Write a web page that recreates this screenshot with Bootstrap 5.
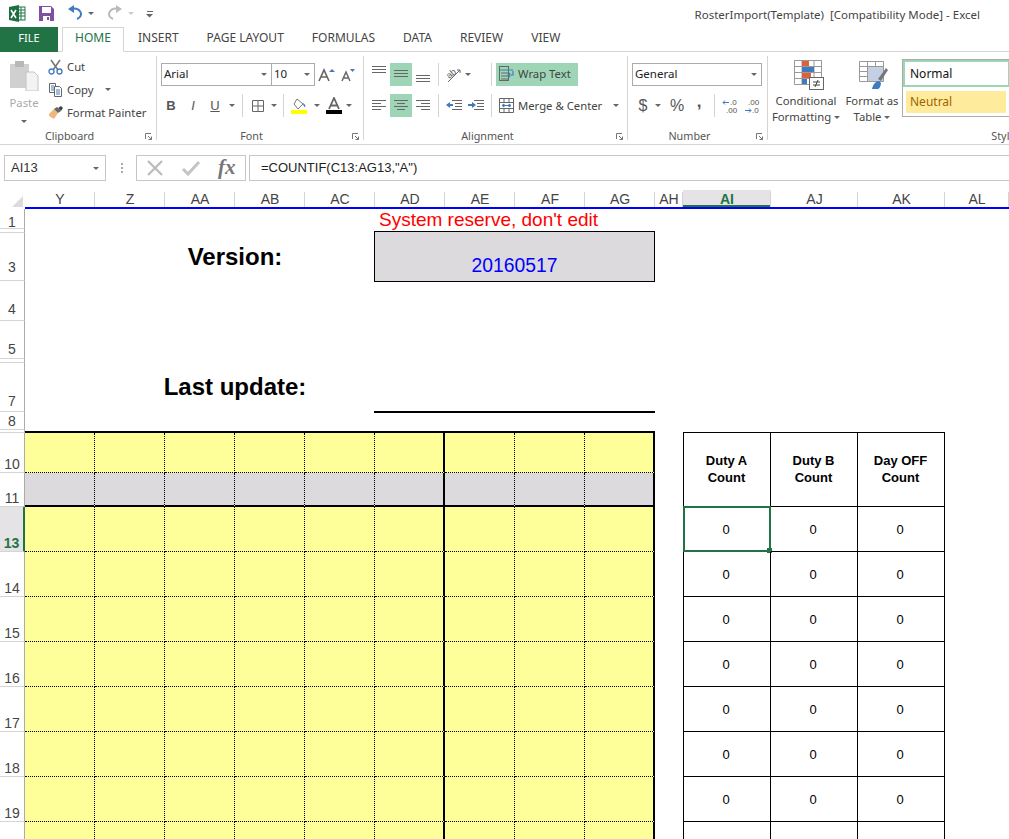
<!DOCTYPE html>
<html lang="en">
<head>
    <meta charset="UTF-8">
    <title>RosterImport(Template) [Compatibility Mode] - Excel</title>
    <link href="https://cdn.jsdelivr.net/npm/bootstrap@5.3.0/dist/css/bootstrap.min.css" rel="stylesheet">
    <style>
        html, body { height: 839px; overflow: hidden; background: #fff; }
        body { font-family: "Noto Sans", "Liberation Sans", sans-serif; font-size: 11.3px; color: #444; line-height: 16px; }

        /* title bar */
        .qat { height: 27px; }
        .doc-title { margin-left: auto; padding-right: 29px; padding-top: 2px; font-size: 11.5px; color: #444; }

        /* tabs */
        .xl-tabs { height: 25px; border-bottom: 1px solid #d4d4d4; flex-wrap: nowrap; }
        .xl-tabs .nav-link { height: 25px; padding: 3px 14px 0; color: #444; border: 0; border-radius: 0; font-size: 12px; margin: 0; }
        .xl-tabs .file-tab { width: 58px; padding: 3px 0 0; text-align: center; background: #217346; color: #fff; margin-right: 4px; font-size: 11px; }
        .xl-tabs .nav-link.active { width: 62px; padding: 2px 0 0; text-align: center; color: #217346; border: 1px solid #d4d4d4; border-bottom-color: #fff; background: #fff; }

        /* ribbon */
        .ribbon { height: 93px; padding-top: 4px; border-bottom: 1px solid #d4d4d4; }
        .rb-group { height: 84px; flex: none; border-right: 1px solid #d4d4d4; }
        .rb-clip { width: 157px; }
        .rb-font { width: 207px; padding-left: 3px; }
        .rb-align { width: 264px; padding-left: 4px; }
        .rb-num { width: 140px; padding-left: 4px; }
        .rb-styles { width: 476px; border-right: 0; }
        .rb-body { height: 72px; }
        .rb-rows { padding-top: 7px; }
        .rb-row { height: 23px; margin-bottom: 8px; }
        .rb-label { height: 12px; line-height: 16px; text-align: center; position: relative; color: #555; font-size: 10.8px; white-space: nowrap; padding-right: 17px; }
        .launcher { position: absolute; right: 4px; top: 5px; display: block; }
        .rb-font .rb-label, .rb-align .rb-label, .rb-num .rb-label { margin-left: -3px; }
        .rb-styles .rb-label { padding-right: 0; }

        .tool { height: 23px; flex: none; display: flex; align-items: center; justify-content: center; }
        .tw8 { width: 8px; } .tw10 { width: 10px; } .tw12 { width: 12px; } .tw13 { width: 13px; }
        .tw20 { width: 20px; } .tw22 { width: 22px; }
        .tool-on { background: #9fd5b7; }
        .letter { font-family: "Liberation Sans", sans-serif; font-size: 13px; color: #555; }
        .letter-big { font-size: 16px; }
        .letter-comma { font-size: 17px; padding-bottom: 8px; }
        .caret-d { display: inline-block; width: 0; height: 0; border-top: 3px solid #666; border-left: 3px solid transparent; border-right: 3px solid transparent; flex: none; }
        .rb-sep { width: 5px; height: 23px; border-right: 1px solid #d4d4d4; flex: none; }
        .rb-sep-wide { width: 19px; }

        .combo { height: 23px; border: 1px solid #ababab; display: flex; align-items: center; background: #fff; padding: 0 4px 1px 2px; color: #222; justify-content: space-between; flex: none; font-size: 11.5px; }
        .combo-font { width: 111px; margin-left: 1px; }
        .combo-size { width: 44px; margin-left: -1px; }
        .combo-num { width: 130px; }

        .clip-paste { width: 48px; padding-top: 4px; color: #aaa; }
        .clip-list { margin-top: -1px; }
        .clip-item { height: 23px; gap: 4px; white-space: nowrap; }
        .wrap-btn { width: 82px; height: 23px; gap: 4px; padding: 0 0 1px 3px; margin-left: 4px; white-space: nowrap; }
        .merge-btn { height: 23px; gap: 4px; padding-left: 3px; margin-left: 4px; white-space: nowrap; }
        .merge-btn .caret-d { margin-left: 7px; }

        .big-cond { width: 76px; padding-top: 4px; text-align: center; white-space: nowrap; }
        .big-tab { width: 56px; padding-top: 4px; text-align: center; white-space: nowrap; }
        .big-cond svg, .big-tab svg { display: block; margin: 0 auto 3px; }
        .big-cond .caret-d, .big-tab .caret-d { vertical-align: middle; }
        .style-box { width: 130px; height: 58px; margin: 3px 0 0 2px; border: 1px solid #ababab; border-right: 0; }
        .style-normal { width: 107px; height: 27px; border: 2px solid #9fd5b7; padding-left: 5px; line-height: 23px; color: #111; font-size: 12px; }
        .style-neutral { width: 100px; height: 22px; margin: 4px 0 0 3px; background: #ffeb9c; color: #9c6500; padding-left: 4px; line-height: 21px; font-size: 12px; }

        /* formula bar */
        .fx-bar { height: 26px; margin-top: 10px; padding-left: 4px; }
        .name-box { width: 102px; border: 1px solid #c6c6c6; padding: 0 6px; font-family: "Liberation Sans", sans-serif; font-size: 13px; color: #333; }
        .fx-dots { width: 30px; }
        .fx-btns { width: 110px; border: 1px solid #c6c6c6; }
        .fx-btns > div { flex: 1; }
        .fx-input { margin-left: 3px; border: 1px solid #c6c6c6; border-right: 0; padding-left: 11px; font-family: "Liberation Sans", sans-serif; font-size: 13px; color: #222; line-height: 24px; }

        /* sheet */
        .sheet { margin-top: 9px; display: grid;
            grid-template-columns: 25px repeat(9, 70px) 28px 88px 87px 87px 64px;
            grid-template-rows: 19px 20px 4px 48px 40px 38px 4px 49px 18px 3px 40px 34px repeat(8, 45px);
            font-family: "Liberation Sans", sans-serif; color: #000; }
        .col-head { border-bottom: 2px solid #00f; position: relative; text-align: center; color: #444; font-size: 14px; line-height: 18px; }
        .col-head::after { content: ""; position: absolute; right: 0; top: 2px; bottom: 0; border-right: 1px solid #d4d4d4; }
        .col-head.picked { background: #e6e3e6; color: #217346; font-weight: 700; box-shadow: inset 0 -2px 0 #217346; }
        .col-corner { position: relative; }
        .col-corner::after { content: ""; position: absolute; right: 2px; bottom: 2px; border-style: solid; border-width: 0 0 11px 11px; border-color: transparent transparent #dcdcdc transparent; }
        .row-head { border-right: 1px solid #ababab; border-bottom: 1px solid #d4d4d4; display: flex; align-items: flex-end; justify-content: center; color: #444; font-size: 14px; line-height: 16px; overflow: hidden; }
        .row-head.picked { background: #e6e3e6; color: #217346; font-weight: 700; border-right: 2px solid #217346; }
        .roster { border-right: 1px dotted #000; border-bottom: 1px dotted #000; background: #ff9; }
        .roster.grey { background: #dcdadc; }
        .roster.heavy-r { border-right: 2px solid #000; }
        .roster.heavy-b { border-bottom: 2px solid #000; }
        .roster-top { border-bottom: 2px solid #000; }
        .big-label { font-size: 24px; font-weight: 700; line-height: 28px; text-align: center; align-self: end; white-space: nowrap; }
        .label-version { padding-bottom: 10px; }
        .label-update { padding-bottom: 11px; }
        .reserve { color: #f00; font-size: 19px; line-height: 22px; padding-left: 4px; white-space: nowrap; align-self: end; margin-bottom: -2px; }
        .version-box { margin: 2px 0 -1px -1px; background: #dcdadc; border: 1px solid #000; color: #00f; font-size: 19.3px; text-align: center; padding-top: 23px; line-height: 22px; }
        .update-line { border-bottom: 2px solid #000; margin-left: -1px; margin-bottom: -1px; }
        .count-top { border-bottom: 1px solid #000; }
        .count { border-right: 1px solid #000; border-bottom: 1px solid #000; display: flex; align-items: center; justify-content: center; text-align: center; font-size: 13px; line-height: 17px; position: relative; padding-right: 2px; }
        .count.first { border-left: 1px solid #000; }
        .count.head { font-weight: 700; padding-bottom: 2px; padding-right: 1px; }
        .sel-cell { position: absolute; left: -1px; top: -1px; right: -1px; bottom: -1px; border: 2px solid #217346; }
        .sel-handle { position: absolute; right: -3px; bottom: -3px; width: 5px; height: 5px; background: #217346; }
    </style>
</head>
<body>

    <!-- Title bar -->
    <div class="qat d-flex align-items-center">
        <svg width="160" height="27" viewBox="0 0 160 27">
            <rect x="15" y="7" width="10" height="13" fill="#fff" stroke="#217346"/>
            <path d="M18 10h7M18 13h7M18 16h7M21 7v13" stroke="#217346" fill="none"/>
            <path d="M9 7l10-2v17l-10-2z" fill="#1d6f42"/>
            <path d="M11 10l5 8M16 10l-5 8" stroke="#fff" stroke-width="1.6"/>
            <path d="M39 6h12l3 3v12h-15z" fill="#7f4fa0"/>
            <rect x="42" y="7" width="9" height="6" fill="#fff"/>
            <rect x="43" y="16" width="7" height="5" fill="#fff"/>
            <rect x="47" y="17" width="2" height="3" fill="#7f4fa0"/>
            <path d="M71 9a7 5.500 0 1 1 6 10" fill="none" stroke="#3f7cbf" stroke-width="2"/>
            <path d="M68 9l6-4v8z" fill="#3f7cbf"/>
            <path d="M88 12h6l-3 3z" fill="#666"/>
            <path d="M119 9a7 5.500 0 1 0 -6 10" fill="none" stroke="#bbb" stroke-width="2"/>
            <path d="M122 9l-6-4v8z" fill="#bbb"/>
            <path d="M128 12h6l-3 3z" fill="#ccc"/>
            <path d="M147 11.500h6" stroke="#666"/>
            <path d="M146 14h7l-3.500 3.500z" fill="#666"/>
        </svg>
        <div class="doc-title">RosterImport(Template)&nbsp; [Compatibility Mode] - Excel</div>
    </div>

    <!-- Tabs -->
    <ul class="nav xl-tabs">
        <li class="nav-item"><a class="nav-link file-tab" href="#">FILE</a></li>
        <li class="nav-item"><a class="nav-link active" href="#">HOME</a></li>
        <li class="nav-item"><a class="nav-link" href="#">INSERT</a></li>
        <li class="nav-item"><a class="nav-link" href="#">PAGE LAYOUT</a></li>
        <li class="nav-item"><a class="nav-link" href="#">FORMULAS</a></li>
        <li class="nav-item"><a class="nav-link" href="#">DATA</a></li>
        <li class="nav-item"><a class="nav-link" href="#">REVIEW</a></li>
        <li class="nav-item"><a class="nav-link" href="#">VIEW</a></li>
    </ul>

    <!-- Ribbon -->
    <div class="ribbon d-flex overflow-hidden">

        <!-- Clipboard -->
        <div class="rb-group rb-clip">
            <div class="rb-body d-flex">
                <div class="clip-paste text-center">
                    <svg width="30" height="31" viewBox="0 0 30 31" class="d-block mx-auto">
                        <rect x="1" y="4" width="19" height="24" fill="#d0d0d0"/>
                        <rect x="6" y="1" width="9" height="6" fill="#b8b8b8"/>
                        <path d="M17 12h8l4 4v15h-12z" fill="#f3f3f3" stroke="#c4c4c4"/>
                    </svg>
                    <div class="mt-1">Paste</div>
                    <span class="caret-d mt-1"></span>
                </div>
                <div class="clip-list">
                    <div class="clip-item d-flex align-items-center">
                        <svg width="15" height="16" viewBox="0 0 15 16">
                            <path d="M3 1l7 10M12 1l-7 10" stroke="#777" stroke-width="1.600"/>
                            <circle cx="3.500" cy="12.500" r="2.500" fill="none" stroke="#3f7cbf" stroke-width="1.300"/>
                            <circle cx="11.500" cy="12.500" r="2.500" fill="none" stroke="#3f7cbf" stroke-width="1.300"/>
                        </svg>
                        <span>Cut</span>
                    </div>
                    <div class="clip-item d-flex align-items-center">
                        <svg width="15" height="15" viewBox="0 0 15 15" fill="#fff" stroke="#666">
                            <path d="M1.500 1.500h6v9h-6z"/>
                            <path d="M6.500 4.500h5l2 2v8h-7z"/>
                            <path d="M3 4h3M3 6h3M3 8h3M8 8h4M8 10h4M8 12h4" stroke="#3f7cbf"/>
                        </svg>
                        <span>Copy</span>
                        <span class="caret-d ms-2"></span>
                    </div>
                    <div class="clip-item d-flex align-items-center">
                        <svg width="15" height="15" viewBox="0 0 15 15">
                            <path d="M1 9l5-5 4 4-4 6-5-3z" fill="#f0b878"/>
                            <path d="M6 4l3-2 4 4-3 2z" fill="#666"/>
                            <path d="M10 3l3-2 2 2-2 3z" fill="#444"/>
                        </svg>
                        <span>Format Painter</span>
                    </div>
                </div>
            </div>
            <div class="rb-label">Clipboard
                <svg class="launcher" width="7" height="7" viewBox="0 0 7 7"><path d="M0.500 6V0.500H6M3 3l3.500 3.500M6.500 3.500v3h-3" fill="none" stroke="#777"/></svg>
            </div>
        </div>

        <!-- Font -->
        <div class="rb-group rb-font">
            <div class="rb-body rb-rows">
                <div class="rb-row d-flex">
                    <div class="combo combo-font"><span>Arial</span><span class="caret-d"></span></div>
                    <div class="combo combo-size"><span>10</span><span class="caret-d"></span></div>
                    <div class="tool tw22"><svg width="20" height="16" viewBox="0 0 20 16"><path d="M3 14L8 3l5 11M5 10h6" fill="none" stroke="#666" stroke-width="1.600"/><path d="M13 5l3-3 3 3z" fill="#3f7cbf"/></svg></div>
                    <div class="tool tw20"><svg width="18" height="16" viewBox="0 0 18 16"><path d="M4 14l4-9 4 9M6 11h4" fill="none" stroke="#666" stroke-width="1.500"/><path d="M12 2h5l-2.500 3z" fill="#3f7cbf"/></svg></div>
                </div>
                <div class="rb-row d-flex">
                    <div class="tool tw22 letter fw-bold">B</div>
                    <div class="tool tw22 letter fst-italic">I</div>
                    <div class="tool tw22 letter text-decoration-underline">U</div>
                    <div class="tool tw12"><span class="caret-d"></span></div>
                    <div class="rb-sep"></div>
                    <div class="tool tw22 ms-1"><svg width="14" height="14" viewBox="0 0 14 14"><path d="M1.500 1.500h11v11h-11zM7 1.500v11M1.500 7h11" fill="none" stroke="#666"/></svg></div>
                    <div class="tool tw10"><span class="caret-d"></span></div>
                    <div class="rb-sep"></div>
                    <div class="tool tw22 ms-1"><svg width="17" height="17" viewBox="0 0 17 17"><path d="M6 2l6 5-5 5-4-5z" fill="#fff" stroke="#777"/><path d="M12 6c2 1 3 3 2 4-1 0-2-2-2-4z" fill="#3f7cbf"/><rect x="0" y="13" width="16" height="4" fill="#ff0"/></svg></div>
                    <div class="tool tw13"><span class="caret-d"></span></div>
                    <div class="tool tw22"><svg width="16" height="17" viewBox="0 0 16 17"><path d="M3 12L8 1l5 11M5 8.500h6" fill="none" stroke="#666" stroke-width="1.800"/><rect x="0" y="13" width="16" height="4" fill="#000"/></svg></div>
                    <div class="tool tw8"><span class="caret-d"></span></div>
                </div>
            </div>
            <div class="rb-label">Font
                <svg class="launcher" width="7" height="7" viewBox="0 0 7 7"><path d="M0.500 6V0.500H6M3 3l3.500 3.500M6.500 3.500v3h-3" fill="none" stroke="#777"/></svg>
            </div>
        </div>

        <!-- Alignment -->
        <div class="rb-group rb-align">
            <div class="rb-body rb-rows">
                <div class="rb-row d-flex">
                    <div class="tool tw22"><svg width="14" height="23" viewBox="0 0 14 23"><path d="M0 3.500h14M0 6.500h14M0 9.500h14" stroke="#666"/></svg></div>
                    <div class="tool tw22 tool-on"><svg width="14" height="23" viewBox="0 0 14 23"><path d="M0 7.500h14M0 10.500h14M0 13.500h14" stroke="#666"/></svg></div>
                    <div class="tool tw22"><svg width="14" height="23" viewBox="0 0 14 23"><path d="M0 12.500h14M0 15.500h14M0 18.500h14" stroke="#666"/></svg></div>
                    <div class="rb-sep"></div>
                    <div class="tool tw20 ms-1"><svg width="18" height="17" viewBox="0 0 18 17"><text x="3" y="11" font-family="Liberation Sans, sans-serif" font-size="9" fill="#555" transform="rotate(-40 7 9)">ab</text><path d="M4 16L16 4M13 4h3v3" fill="none" stroke="#666"/></svg></div>
                    <div class="tool tw10"><span class="caret-d"></span></div>
                    <div class="rb-sep rb-sep-wide"></div>
                    <div class="wrap-btn tool-on d-flex align-items-center">
                        <svg width="15" height="16" viewBox="0 0 15 16"><rect x="0.500" y="0.500" width="9" height="14" fill="none" stroke="#666"/><path d="M1 4h13" stroke="#3f7cbf"/><path d="M2 7h7M2 10h7M2 13h7" stroke="#666"/><path d="M14 5v4h-5M11 7l-2 2 2 2" fill="none" stroke="#3f7cbf" stroke-width="1.200"/></svg>
                        <span>Wrap Text</span>
                    </div>
                </div>
                <div class="rb-row d-flex">
                    <div class="tool tw22"><svg width="14" height="12" viewBox="0 0 14 12"><path d="M0 .5h14M0 3.500h9M0 6.500h14M0 9.500h9" stroke="#666"/></svg></div>
                    <div class="tool tw22 tool-on"><svg width="14" height="12" viewBox="0 0 14 12"><path d="M0 .5h14M3 3.500h8M0 6.500h14M3 9.500h8" stroke="#666"/></svg></div>
                    <div class="tool tw22"><svg width="14" height="12" viewBox="0 0 14 12"><path d="M0 .5h14M5 3.500h9M0 6.500h14M5 9.500h9" stroke="#666"/></svg></div>
                    <div class="rb-sep"></div>
                    <div class="tool tw22 ms-1"><svg width="16" height="12" viewBox="0 0 16 12"><path d="M6 .5h10M9 3.500h7M9 6.500h7M6 9.500h10" stroke="#666"/><path d="M0 5l4-3v6z" fill="#3f7cbf"/><path d="M3 5h4" stroke="#3f7cbf" stroke-width="2"/></svg></div>
                    <div class="tool tw22"><svg width="16" height="12" viewBox="0 0 16 12"><path d="M6 .5h10M9 3.500h7M9 6.500h7M6 9.500h10" stroke="#666"/><path d="M8 5L4 2v6z" fill="#3f7cbf"/><path d="M0 5h4" stroke="#3f7cbf" stroke-width="2"/></svg></div>
                    <div class="rb-sep"></div>
                    <div class="merge-btn d-flex align-items-center">
                        <svg width="15" height="15" viewBox="0 0 15 15"><path d="M.5.5h14v14H.5zM.5 4.500h14M.5 10.500h14M5 .5v4M10 .5v4M5 10.500v4M10 10.500v4" fill="none" stroke="#666"/><path d="M3 7.500h9M3 7.500l2-1.500v3zM12 7.500l-2-1.500v3z" stroke="#3f7cbf" fill="#3f7cbf"/></svg>
                        <span>Merge &amp; Center</span>
                        <span class="caret-d"></span>
                    </div>
                </div>
            </div>
            <div class="rb-label">Alignment
                <svg class="launcher" width="7" height="7" viewBox="0 0 7 7"><path d="M0.500 6V0.500H6M3 3l3.500 3.500M6.500 3.500v3h-3" fill="none" stroke="#777"/></svg>
            </div>
        </div>

        <!-- Number -->
        <div class="rb-group rb-num">
            <div class="rb-body rb-rows">
                <div class="rb-row d-flex">
                    <div class="combo combo-num"><span>General</span><span class="caret-d"></span></div>
                </div>
                <div class="rb-row d-flex">
                    <div class="tool tw22 letter letter-big">$</div>
                    <div class="tool tw8"><span class="caret-d"></span></div>
                    <div class="tool tw22 ms-1 letter letter-big">%</div>
                    <div class="tool tw22 letter letter-comma fw-bold">,</div>
                    <div class="rb-sep"></div>
                    <div class="tool tw22 ms-1"><svg width="17" height="16" viewBox="0 0 17 16" font-family="Liberation Sans, sans-serif" font-size="8" fill="#555"><path d="M1 4.500h6M1 4.500l2-2M1 4.500l2 2" stroke="#3f7cbf" fill="none"/><text x="8" y="7">.0</text><text x="4" y="15">.00</text></svg></div>
                    <div class="tool tw22"><svg width="17" height="16" viewBox="0 0 17 16" font-family="Liberation Sans, sans-serif" font-size="8" fill="#555"><text x="4" y="7">.00</text><path d="M1 12.500h6M7 12.500l-2-2M7 12.500l-2 2" stroke="#3f7cbf" fill="none"/><text x="8" y="15">.0</text></svg></div>
                </div>
            </div>
            <div class="rb-label">Number
                <svg class="launcher" width="7" height="7" viewBox="0 0 7 7"><path d="M0.500 6V0.500H6M3 3l3.500 3.500M6.500 3.500v3h-3" fill="none" stroke="#777"/></svg>
            </div>
        </div>

        <!-- Styles -->
        <div class="rb-group rb-styles">
            <div class="rb-body d-flex">
                <div class="big-cond">
                    <svg width="36" height="30" viewBox="-6 0 36 30">
                        <path d="M.5.500h27v24h-27zM.5 6.500h27M.5 12.500h27M.5 18.500h27M8 .5v24M20 .5v24" fill="none" stroke="#999"/>
                        <rect x="8" y="1" width="7" height="5" fill="#e0603a"/>
                        <rect x="8" y="7" width="12" height="5" fill="#3f7cbf"/>
                        <rect x="8" y="13" width="9" height="5" fill="#e0603a"/>
                        <rect x="8" y="19" width="5" height="5" fill="#3f7cbf"/>
                        <rect x="15.500" y="17.500" width="14" height="12" fill="#fff" stroke="#666"/>
                        <path d="M19 22h7M19 25h7M24 20l-3 7" stroke="#444" fill="none"/>
                    </svg>
                    Conditional<br>Formatting <span class="caret-d"></span>
                </div>
                <div class="big-tab">
                    <svg width="34" height="30" viewBox="-4 0 34 30">
                        <path d="M.5 1.500h24v20H.5zM.5 6.500h24M.5 11.500h24M.5 16.500h24M8.500 1.500v20M16.500 1.500v20" fill="none" stroke="#999"/>
                        <rect x="9" y="7" width="15" height="14" fill="#c3d0e4"/>
                        <path d="M19 19l8-11 2 2-7 11z" fill="#777"/>
                        <path d="M13 29c1-5 4-8 7-8l2 2c0 3-2 6-3 6z" fill="#3f7cbf"/>
                    </svg>
                    Format as<br>Table <span class="caret-d"></span>
                </div>
                <div class="style-box">
                    <div class="style-normal">Normal</div>
                    <div class="style-neutral">Neutral</div>
                </div>
            </div>
            <div class="rb-label">Styles</div>
        </div>
    </div>

    <!-- Formula bar -->
    <div class="fx-bar d-flex">
        <div class="name-box d-flex align-items-center justify-content-between"><span>AI13</span><span class="caret-d"></span></div>
        <div class="fx-dots d-flex align-items-center justify-content-center">
            <svg width="3" height="12" viewBox="0 0 3 12"><path d="M1 1h2v2H1zM1 5h2v2H1zM1 9h2v2H1z" fill="#aaa"/></svg>
        </div>
        <div class="fx-btns d-flex">
            <div class="d-flex align-items-center justify-content-center"><svg width="16" height="16" viewBox="0 0 16 16"><path d="M1 1l14 14M15 1L1 15" stroke="#bbb" stroke-width="2.200"/></svg></div>
            <div class="d-flex align-items-center justify-content-center"><svg width="20" height="16" viewBox="0 0 20 16"><path d="M2 9l5 5 11-12" fill="none" stroke="#c4c4c4" stroke-width="3"/></svg></div>
            <div class="d-flex align-items-center justify-content-center"><svg width="22" height="24" viewBox="0 0 22 24"><text x="2" y="18" font-family="Liberation Serif, serif" font-style="italic" font-weight="700" font-size="21" fill="#777">fx</text></svg></div>
        </div>
        <div class="fx-input flex-grow-1">=COUNTIF(C13:AG13,"A")</div>
    </div>

    <!-- Sheet -->
    <div class="sheet" id="sheet"></div>

    <script>
        const sheet = document.getElementById('sheet');
        const columns = ['Y', 'Z', 'AA', 'AB', 'AC', 'AD', 'AE', 'AF', 'AG', 'AH', 'AI', 'AJ', 'AK', 'AL'];
        // row name, grid line, lift of the label. Hidden rows have no label
        const rows = [['1', 2, -2], ['', 3, 0], ['3', 4, 5], ['4', 5, 3], ['5', 6, 1], ['', 7, 0], ['7', 8, 2], ['8', 9, 0], ['', 10, 0],
            ['10', 11, 0], ['11', 12, 0], ['13', 13, 0], ['14', 14, 0], ['15', 15, 0], ['16', 16, 0], ['17', 17, 0], ['18', 18, 0], ['19', 19, 0], ['', 20, 0]];

        function addCell(className, col, colEnd, row, rowEnd, html) {
            const cell = document.createElement('div');
            cell.className = className;
            cell.style.gridArea = row + ' / ' + col + ' / ' + rowEnd + ' / ' + colEnd;
            cell.innerHTML = html || '';
            sheet.appendChild(cell);
            return cell;
        }

        // Column and row headings
        addCell('col-corner', 1, 2, 1, 2);
        columns.forEach((name, i) => {
            addCell('col-head' + (name === 'AI' ? ' picked' : ''), i + 2, i + 3, 1, 2, name);
        });
        rows.forEach(([name, line, lift]) => {
            const heading = name ? '<span style="margin-bottom:' + lift + 'px">' + name + '</span>' : '';
            addCell('row-head' + (name === '13' ? ' picked' : ''), 1, 2, line, line + 1, heading);
        });

        // Top block
        addCell('reserve', 7, 11, 2, 3, "System reserve, don't edit");
        addCell('big-label label-version', 2, 8, 4, 5, 'Version:');
        addCell('version-box', 7, 11, 3, 5, '20160517');
        addCell('big-label label-update', 2, 8, 8, 9, 'Last update:');
        addCell('update-line', 7, 11, 8, 9);

        // Yellow roster block
        for (let c = 2; c <= 10; c++) {
            addCell('roster-top', c, c + 1, 10, 11);
            rows.filter(r => r[1] >= 11).forEach(([name, line]) => {
                let cls = 'roster';
                if (name === '11') cls += ' grey heavy-b';
                if (c === 7 || c === 10) cls += ' heavy-r';
                addCell(cls, c, c + 1, line, line + 1);
            });
        }

        // Count table on the right
        const heads = ['Duty A<br>Count', 'Duty B<br>Count', 'Day OFF<br>Count'];
        heads.forEach((text, i) => {
            const c = 12 + i;
            addCell('count-top', c, c + 1, 10, 11);
            addCell('count head' + (i === 0 ? ' first' : ''), c, c + 1, 11, 13, text);
            rows.filter(r => r[1] >= 13).forEach(([name, line]) => {
                const cell = addCell('count' + (i === 0 ? ' first' : ''), c, c + 1, line, line + 1, name ? '0' : '');
                if (name === '13' && i === 0) {
                    cell.insertAdjacentHTML('beforeend', '<div class="sel-cell"><div class="sel-handle"></div></div>');
                }
            });
        });
    </script>

    <script src="https://cdn.jsdelivr.net/npm/bootstrap@5.3.0/dist/js/bootstrap.bundle.min.js"></script>
</body>
</html>
